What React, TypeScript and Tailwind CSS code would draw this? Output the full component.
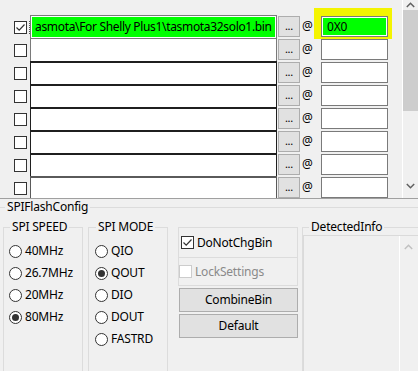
import React from 'react';

const FONT = "font-['Noto_Sans',sans-serif] text-[12px] leading-[16px] tracking-[-0.2px] text-black";

// row borders: first one is the active (green) path, then a gray row, dark rows, gray again
const ROWS = [
    { path: 'asmota\\For Shelly Plus1\\tasmota32solo1.bin', addr: '0X0', checked: true, tone: 'active' },
    { path: '', addr: '', checked: false, tone: 'gray' },
    { path: '', addr: '', checked: false, tone: 'dark' },
    { path: '', addr: '', checked: false, tone: 'dark' },
    { path: '', addr: '', checked: false, tone: 'dark' },
    { path: '', addr: '', checked: false, tone: 'dark' },
    { path: '', addr: '', checked: false, tone: 'dark' },
    { path: '', addr: '', checked: false, tone: 'gray2' },
];

const CheckMark = ({ color = '#333' }: { color?: string }) => (
    <svg width="11" height="11" viewBox="0 0 11 11" className="block">
        <path d="M1.5 5.5 L4.2 8.2 L9.5 2.5" fill="none" stroke={color} strokeWidth="1.2" />
    </svg>
);

const Box = ({ checked, disabled }: { checked?: boolean; disabled?: boolean }) => (
    <span
        className={`flex h-[13px] w-[13px] shrink-0 items-center justify-center border bg-white ${
            disabled ? 'border-[#cccccc]' : 'border-[#333333]'
        }`}
    >
        {checked && <CheckMark />}
    </span>
);

const Radio = ({ label, checked }: { label: string; checked?: boolean }) => (
    <div className="flex h-[22px] items-center gap-[3px]">
        <span className="flex h-[13px] w-[13px] items-center justify-center rounded-full border border-[#333333] bg-white">
            {checked && <span className="h-[7px] w-[7px] rounded-full bg-[#333333]" />}
        </span>
        <span>{label}</span>
    </div>
);

const FileRow = ({ row }: { row: (typeof ROWS)[number] }) => {
    const fieldTone =
        row.tone === 'active'
            ? 'border-t border-x border-[#7a7a7a] p-[1px]'
            : row.tone === 'dark'
              ? 'border-t-2 border-x border-[#1f1f1f]'
              : row.tone === 'gray2'
                ? 'border-t-2 border-x border-[#5a5a5a]'
                : 'border-t border-x border-[#7a7a7a]';
    const isActive = row.tone === 'active';

    return (
        <div className="flex h-[23px] shrink-0 items-start">
            <div className="relative flex h-full w-[30px] shrink-0 items-start pl-[14px] pt-[6px]">
                <Box checked={row.checked} />
                {isActive && (
                    <span className="absolute left-[29px] top-[6px] h-[13px] border-l border-dotted border-[#555555]" />
                )}
            </div>
            <div className={`h-full w-[247px] shrink-0 bg-white ${fieldTone}`}>
                <div
                    className={`flex h-full items-center overflow-hidden whitespace-nowrap pl-[3px] tracking-[-0.33px] ${
                        isActive ? 'bg-[#00ff00]' : 'bg-white'
                    }`}
                >
                    {row.path}
                </div>
            </div>
            <button className="ml-[1px] mt-[1px] flex h-[21px] w-[22px] shrink-0 items-center justify-center border border-[#adadad] bg-[#e1e1e1] pb-[2px] text-[11px]">
                ...
            </button>
            <span className="w-[21px] shrink-0 pl-[2px] pt-[3px]">@</span>
            <div className="relative mt-[1px] h-[21px] w-[67px] shrink-0">
                {isActive && <span className="absolute -left-[7px] -right-[4px] -top-[8px] -bottom-[2px] bg-[#f4f400]" />}
                <div className="relative h-full border border-[#7a7a7a] bg-white p-[1px]">
                    <div className={`flex h-full items-center pl-[4px] ${isActive ? 'bg-[#00ff00]' : 'bg-white'}`}>
                        {row.addr}
                    </div>
                </div>
            </div>
        </div>
    );
};

const Chevron = ({ up, color = '#606060' }: { up?: boolean; color?: string }) => (
    <svg width="9" height="6" viewBox="0 0 9 6" className="block">
        <path d={up ? 'M0.8 5 L4.5 1.3 L8.2 5' : 'M0.8 1 L4.5 4.7 L8.2 1'} fill="none" stroke={color} strokeWidth="1.5" />
    </svg>
);

export default function App() {
    return (
        <div className={`h-[371px] w-[418px] overflow-hidden bg-[#f0f0f0] ${FONT}`}>
            {/* file list */}
            <div className="flex h-[199px] border-b border-[#a0a0a0]">
                <div className="flex w-[402px] flex-col overflow-hidden pt-[15px]">
                    {ROWS.map((row, i) => (
                        <FileRow key={i} row={row} />
                    ))}
                </div>
                <div className="flex w-[16px] flex-col border-l border-white">
                    <div className="flex h-[10px] items-start justify-center pt-[2px]">
                        <Chevron up />
                    </div>
                    <div className="h-[101px] bg-[#cdcdcd]" />
                    <div className="flex-1" />
                    <div className="flex h-[16px] items-start justify-center pt-[1px]">
                        <Chevron />
                    </div>
                </div>
            </div>

            {/* SPIFlashConfig */}
            <fieldset className="border-t border-[#dcdcdc]">
                <legend className="ml-[5px] px-[2px]">SPIFlashConfig</legend>
                <div className="flex items-start pl-[3px] pt-[4px]">
                    <fieldset className="h-[170px] w-[80px] shrink-0 border border-[#dcdcdc] pl-[5px] pt-[5px]">
                        <legend className="ml-[1px] px-[2px]">SPI SPEED</legend>
                        <Radio label="40MHz" />
                        <Radio label="26.7MHz" />
                        <Radio label="20MHz" />
                        <Radio label="80MHz" checked />
                    </fieldset>

                    <fieldset className="ml-[5px] h-[170px] w-[80px] shrink-0 border border-[#dcdcdc] pl-[6px] pt-[5px]">
                        <legend className="ml-[1px] px-[2px]">SPI MODE</legend>
                        <Radio label="QIO" />
                        <Radio label="QOUT" checked />
                        <Radio label="DIO" />
                        <Radio label="DOUT" />
                        <Radio label="FASTRD" />
                    </fieldset>

                    <div className="ml-[10px] mt-[8px] flex w-[120px] shrink-0 flex-col">
                        <div className="flex h-[31px] items-center gap-[3px] border border-[#dcdcdc] pl-[2px]">
                            <Box checked />
                            <span>DoNotChgBin</span>
                        </div>
                        <div className="flex h-[28px] items-center gap-[3px] border border-t-0 border-[#dcdcdc]">
                            <Box disabled />
                            <span className="text-[#8a8a8a]">LockSettings</span>
                        </div>
                        <button className="ml-[1px] mt-[2px] h-[24px] w-[119px] border border-[#adadad] bg-[#e1e1e1]">
                            CombineBin
                        </button>
                        <button className="ml-[1px] mt-[2px] h-[24px] w-[119px] border border-[#adadad] bg-[#e1e1e1]">
                            Default
                        </button>
                    </div>

                    <fieldset className="ml-[4px] h-[170px] w-[130px] shrink-0 border border-[#dcdcdc]">
                        <legend className="ml-[6px] px-[2px]">DetectedInfo</legend>
                        <div className="flex h-[140px] w-[120px] border border-[#dadada] bg-[#f0f0f0]">
                            <div className="w-[95px]" />
                            <div className="flex w-[17px] justify-center border-l border-white pt-[8px]">
                                <Chevron up color="#c0c0c0" />
                            </div>
                        </div>
                    </fieldset>
                </div>
            </fieldset>
        </div>
    );
}
